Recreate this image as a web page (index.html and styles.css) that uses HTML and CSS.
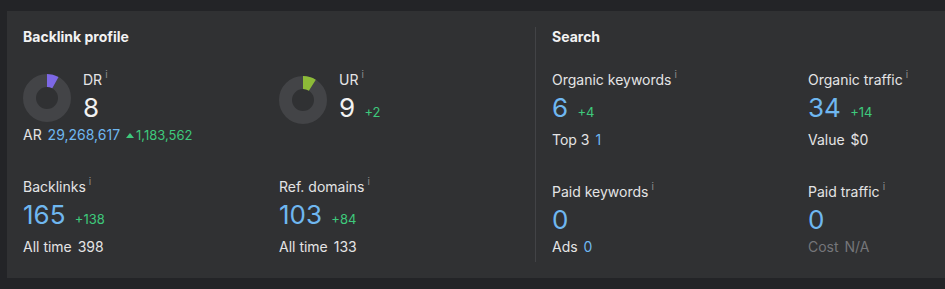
FILE: index.html
```html
<!DOCTYPE html>
<html lang="en">
  <head>
    <meta charset="utf-8">
    <title>Overview</title>
    <link rel="stylesheet" href="styles.css">
  </head>
  <body>
    <div class="card">
      <section class="panel">
        <h2>Backlink profile</h2>
        <div class="grid">
          <div class="metric">
            <div class="rating">
              <svg class="donut" viewBox="0 0 48 48" width="48" height="48">
                <circle class="ring" cx="24" cy="24" r="17.5" pathLength="100"></circle>
                <circle class="arc dr" cx="24" cy="24" r="17.5" pathLength="100" stroke-dasharray="8 92"></circle>
              </svg>
              <div>
                <div class="label">DR<sup>i</sup></div>
                <div class="value white">8</div>
              </div>
            </div>
            <div class="sub">AR <span class="blue">29,268,617</span> <span class="up"><i class="arrow"></i>1,183,562</span></div>
          </div>
          <div class="metric">
            <div class="rating">
              <svg class="donut" viewBox="0 0 48 48" width="48" height="48">
                <circle class="ring" cx="24" cy="24" r="17.5" pathLength="100"></circle>
                <circle class="arc ur" cx="24" cy="24" r="17.5" pathLength="100" stroke-dasharray="9 91"></circle>
              </svg>
              <div>
                <div class="label">UR<sup>i</sup></div>
                <div class="value white">9 <span class="delta">+2</span></div>
              </div>
            </div>
          </div>
          <div class="metric">
            <div class="label">Backlinks<sup>i</sup></div>
            <div class="value">165 <span class="delta">+138</span></div>
            <div class="sub">All time <span>398</span></div>
          </div>
          <div class="metric">
            <div class="label">Ref. domains<sup>i</sup></div>
            <div class="value">103 <span class="delta">+84</span></div>
            <div class="sub">All time <span>133</span></div>
          </div>
        </div>
      </section>
      <section class="panel search">
        <h2>Search</h2>
        <div class="grid">
          <div class="metric">
            <div class="label">Organic keywords<sup>i</sup></div>
            <div class="value">6 <span class="delta">+4</span></div>
            <div class="sub">Top 3 <span class="blue">1</span></div>
          </div>
          <div class="metric">
            <div class="label">Organic traffic<sup>i</sup></div>
            <div class="value">34 <span class="delta">+14</span></div>
            <div class="sub">Value <span>$0</span></div>
          </div>
          <div class="metric">
            <div class="label">Paid keywords<sup>i</sup></div>
            <div class="value">0</div>
            <div class="sub">Ads <span class="blue">0</span></div>
          </div>
          <div class="metric">
            <div class="label">Paid traffic<sup>i</sup></div>
            <div class="value">0</div>
            <div class="sub muted">Cost <span>N/A</span></div>
          </div>
        </div>
      </section>
    </div>
  </body>
</html>
```

FILE: styles.css
```css
body {
  margin: 0;
  padding: 11px 0 0 7px;
  background: #232427;
  color: #e4e4e5;
  font-family: Inter, "Noto Sans", sans-serif;
  font-size: 14px;
  line-height: 20px;
  overflow: hidden;
}

.card {
  display: flex;
  width: 1100px;
  height: 235px;
  padding: 16px 0;
  background: #303133;
}

.panel {
  width: 512px;
  padding: 0 0 0 16px;
}

.panel.search {
  border-left: 1px solid #424346;
}

h2 {
  margin: 0 0 23px;
  font-size: 14px;
  font-weight: 700;
  line-height: 20px;
  color: #f2f2f2;
}

.grid {
  display: grid;
  grid-template-columns: 256px 256px;
  row-gap: 32px;
}

.label {
  color: #e4e4e5;
}

sup {
  font-size: 10px;
  line-height: 0;
  margin-left: 3px;
  color: #8b8c8e;
  vertical-align: 7px;
}

.value {
  font-size: 26px;
  line-height: 35px;
  color: #6fb7f0;
}

.value.white {
  color: #f2f2f2;
}

.delta {
  margin-left: 2px;
  font-size: 13px;
  color: #3ec97c;
}

.sub {
  margin-top: 0;
}

.sub span {
  margin-left: 2px;
}

.blue {
  color: #6fb7f0;
}

.up {
  font-size: 13px;
  color: #3ec97c;
}

.arrow {
  display: inline-block;
  width: 0;
  height: 0;
  margin: 0 2px 2px 0;
  border-left: 4px solid transparent;
  border-right: 4px solid transparent;
  border-bottom: 5px solid #3ec97c;
}

.muted {
  color: #75767a;
}

.rating {
  display: flex;
  align-items: center;
  gap: 12px;
}

.donut {
  display: block;
}

.donut circle {
  fill: none;
  stroke-width: 13;
}

.ring {
  stroke: #434447;
}

.arc {
  transform: rotate(-90deg);
  transform-origin: 24px 24px;
}

.arc.dr {
  stroke: #7d68e6;
}

.arc.ur {
  stroke: #8dbb38;
}
```
